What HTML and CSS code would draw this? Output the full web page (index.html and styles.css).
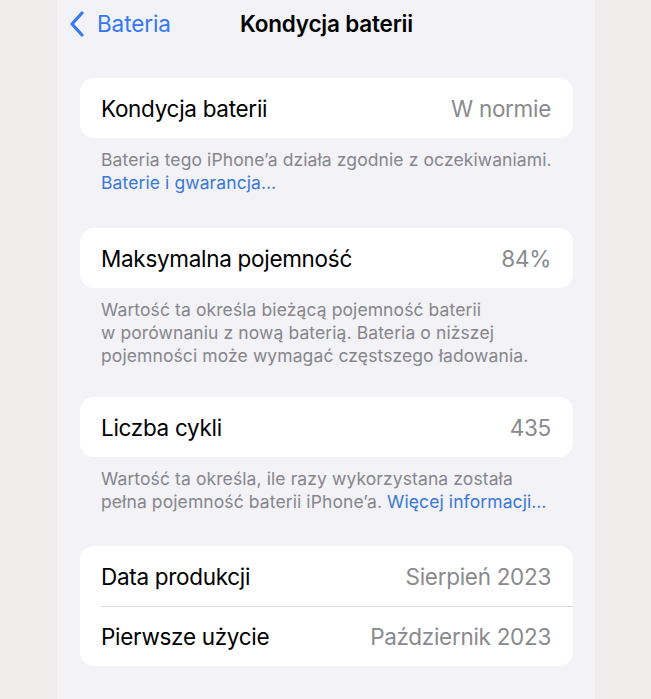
FILE: index.html
```html
<!DOCTYPE html>
<html lang="pl">
<head>
<meta charset="utf-8">
<title>Kondycja baterii</title>
<link rel="stylesheet" href="styles.css">
</head>
<body>
<div class="screen">
  <header class="nav">
    <a class="back" href="#">
      <svg class="chevron" width="16" height="26" viewBox="0 0 16 26" aria-hidden="true">
        <path d="M13 2 L3 13 L13 24" fill="none" stroke="currentColor" stroke-width="3.2" stroke-linecap="round" stroke-linejoin="round"/>
      </svg>
      <span>Bateria</span>
    </a>
    <h1 class="nav-title">Kondycja baterii</h1>
  </header>

  <section class="group first">
    <div class="card">
      <div class="row"><span class="label">Kondycja baterii</span><span class="value">W normie</span></div>
    </div>
    <p class="footer">Bateria tego iPhone’a działa zgodnie z oczekiwaniami.<br><a href="#" class="link">Baterie i gwarancja…</a></p>
  </section>

  <section class="group">
    <div class="card">
      <div class="row"><span class="label">Maksymalna pojemność</span><span class="value">84%</span></div>
    </div>
    <p class="footer">Wartość ta określa bieżącą pojemność baterii<br>w porównaniu z nową baterią. Bateria o niższej<br>pojemności może wymagać częstszego ładowania.</p>
  </section>

  <section class="group after-long">
    <div class="card">
      <div class="row"><span class="label">Liczba cykli</span><span class="value">435</span></div>
    </div>
    <p class="footer">Wartość ta określa, ile razy wykorzystana została<br>pełna pojemność baterii iPhone’a. <a href="#" class="link">Więcej informacji…</a></p>
  </section>

  <section class="group">
    <div class="card">
      <div class="row"><span class="label">Data produkcji</span><span class="value">Sierpień 2023</span></div>
      <div class="row"><span class="label">Pierwsze użycie</span><span class="value">Październik 2023</span></div>
    </div>
  </section>
</div>
</body>
</html>
```

FILE: styles.css
```css
html, body {
  margin: 0;
  padding: 0;
}

body {
  background: #eeedeb;
  font-family: Inter, "Noto Sans", "Liberation Sans", sans-serif;
  -webkit-font-smoothing: antialiased;
}

.screen {
  width: 538px;
  height: 699px;
  margin-left: 57px;
  background: #f2f2f7;
  padding: 0 22px 0 23px;
  box-sizing: border-box;
  overflow: hidden;
}

/* navigation bar */
.nav {
  position: relative;
  height: 47px;
  display: flex;
  align-items: center;
}

.back {
  display: flex;
  align-items: center;
  gap: 12px;
  margin-left: -11px;
  color: #3478f6;
  text-decoration: none;
  font-size: 22.5px;
  letter-spacing: -0.1px;
}

.chevron {
  display: block;
}

.nav-title {
  position: absolute;
  left: 0;
  right: 0;
  top: 0;
  height: 47px;
  margin: 0;
  display: flex;
  align-items: center;
  justify-content: center;
  font-size: 22.5px;
  font-weight: 600;
  letter-spacing: -0.2px;
  color: #000;
  pointer-events: none;
}

/* grouped list sections */
.group {
  margin-top: 33px;
}

.group.first {
  margin-top: 31px;
}

.group.after-long {
  margin-top: 30px;
}

.group.first + .group {
  margin-top: 34px;
}

.card {
  background: #fff;
  border-radius: 14px;
  overflow: hidden;
}

.row {
  height: 60px;
  display: flex;
  align-items: center;
  justify-content: space-between;
  padding: 0 22px 0 21px;
  font-size: 22.5px;
  letter-spacing: -0.3px;
  position: relative;
}

.row + .row::before {
  content: "";
  position: absolute;
  left: 21px;
  right: 0;
  top: 0;
  height: 1px;
  background: #dcdce0;
}

.label {
  color: #000;
}

.value {
  color: #8a8a8e;
}

/* section notes keep their own line breaks */
.footer {
  margin: 0;
  padding: 10px 0 0 21px;
  font-size: 17.5px;
  line-height: 23px;
  color: #86868b;
  letter-spacing: 0.1px;
  white-space: nowrap;
}

.link {
  color: #3a78d8;
  text-decoration: none;
}
```
